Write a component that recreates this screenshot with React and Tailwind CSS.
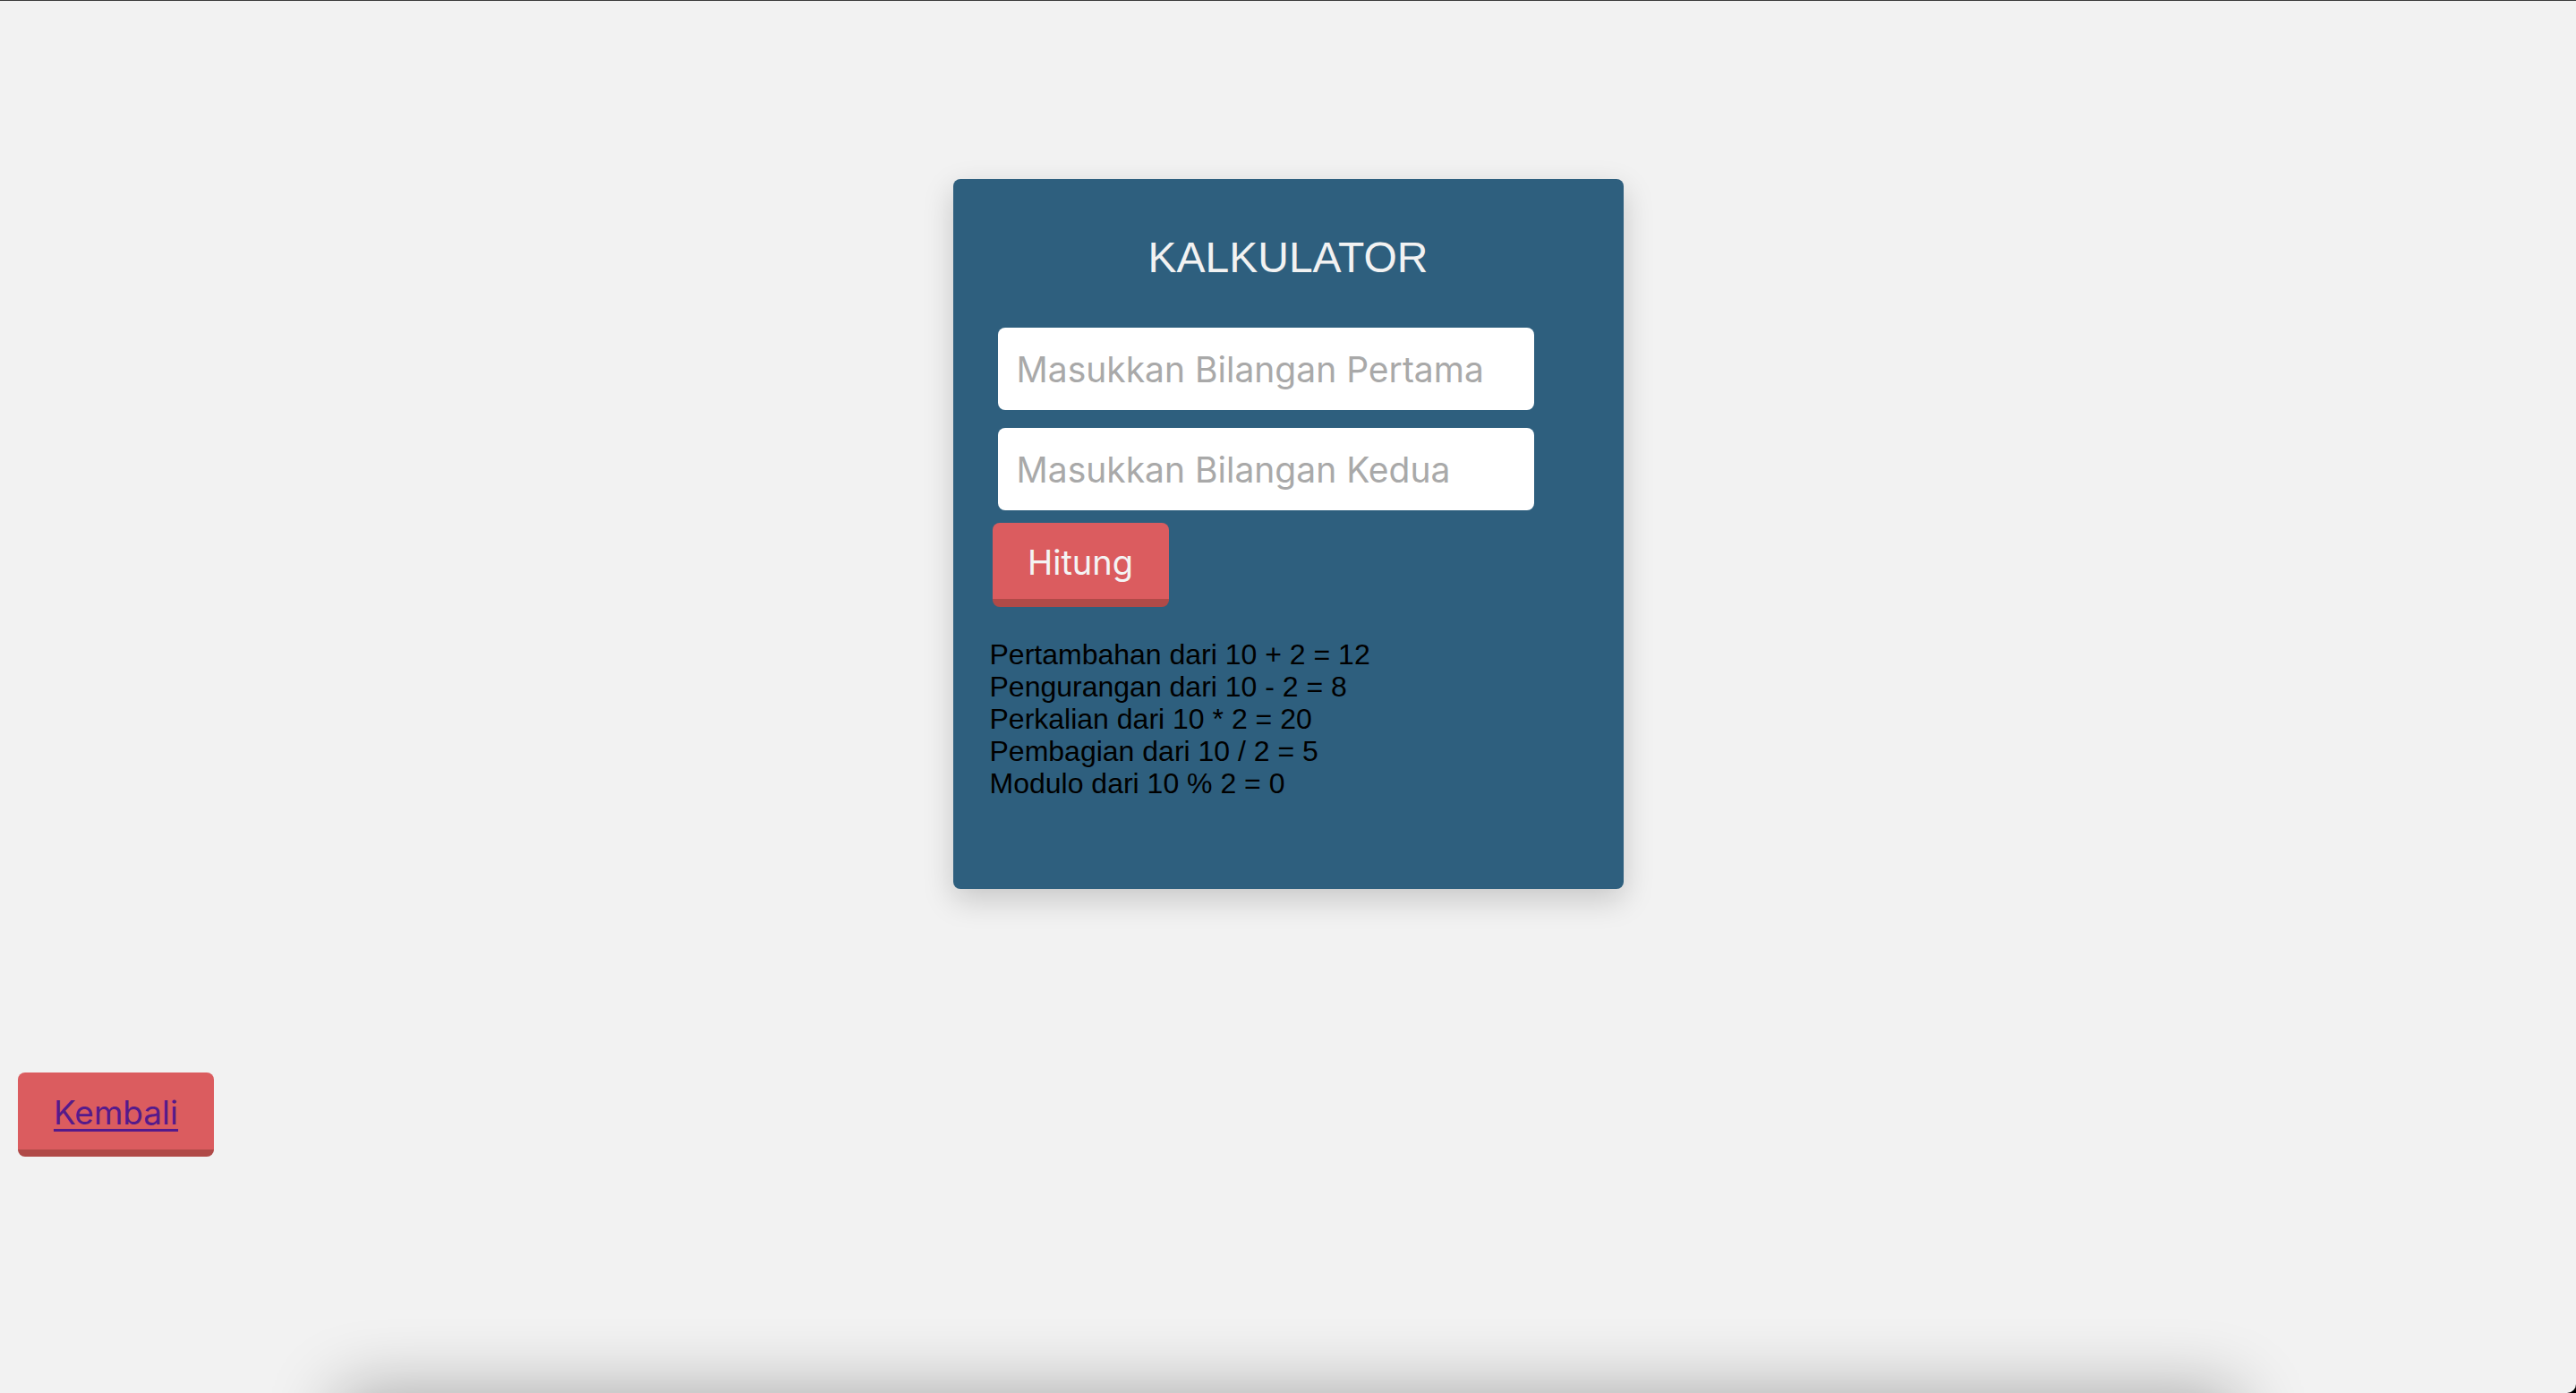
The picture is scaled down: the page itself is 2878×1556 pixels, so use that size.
export default function App() {
  const results = [
    "Pertambahan dari 10 + 2 = 12",
    "Pengurangan dari 10 - 2 = 8",
    "Perkalian dari 10 * 2 = 20",
    "Pembagian dari 10 / 2 = 5",
    "Modulo dari 10 % 2 = 0",
  ];

  return (
    <div className="bg-black h-[1556px]">
      <div className="h-[1556px] overflow-hidden bg-[#f2f2f2] border-t border-[#3c3c3c] rounded-br-[10px] flex flex-col">
        {/* Kalkulator card */}
        <div className="mt-[199px] mx-auto w-[749px] h-[793px] shrink-0 bg-[#2e5f7e] rounded-lg shadow-[0_12px_34px_rgba(0,0,0,0.18)] pt-[60px] font-['Liberation_Sans',Arial,sans-serif]">
          <h1 className="text-center text-[48px] text-[#f2f2f2] leading-[55px]">KALKULATOR</h1>

          <div className="mt-[51px] pl-[50px] flex flex-col gap-[20px]">
            <input
              type="text"
              placeholder="Masukkan Bilangan Pertama"
              className="w-[599px] h-[92px] rounded-lg bg-white pl-[21px] text-[39px] font-['Inter',sans-serif] placeholder:text-[#a9a9a9] outline-none"
            />
            <input
              type="text"
              placeholder="Masukkan Bilangan Kedua"
              className="w-[599px] h-[92px] rounded-lg bg-white pl-[21px] text-[39px] font-['Inter',sans-serif] placeholder:text-[#a9a9a9] outline-none"
            />
          </div>

          <div className="pl-[44px] mt-[14px]">
            <button className="w-[197px] h-[94px] rounded-lg bg-[#db5c5f] border-b-[9px] border-[#b04a48] text-[#f4f4f4] text-[38px] font-['Inter',sans-serif] flex items-center justify-center pt-[4px]">
              Hitung
            </button>
          </div>

          <div className="mt-[35px] pl-[41px] text-[32px] leading-[36px] text-black">
            {results.map((r) => (
              <div key={r}>{r}</div>
            ))}
          </div>
        </div>

        {/* Kembali */}
        <div className="mt-[205px] pl-[20px] shrink-0">
          <button className="w-[219px] h-[94px] rounded-lg bg-[#db5c5f] border-b-[8px] border-[#b04a48] flex items-center justify-center pt-[4px]">
            <a href="#" className="text-[37px] font-['Inter',sans-serif] text-[#551a8b] underline underline-offset-[5px] decoration-[3px]">
              Kembali
            </a>
          </button>
        </div>

        {/* element just below the fold, only its shadow shows */}
        <div className="mt-[270px] mx-auto w-[2120px] h-[300px] shrink-0 bg-[#f2f2f2] rounded-lg shadow-[0_-6px_80px_rgba(0,0,0,0.32)]"></div>
      </div>
    </div>
  );
}
